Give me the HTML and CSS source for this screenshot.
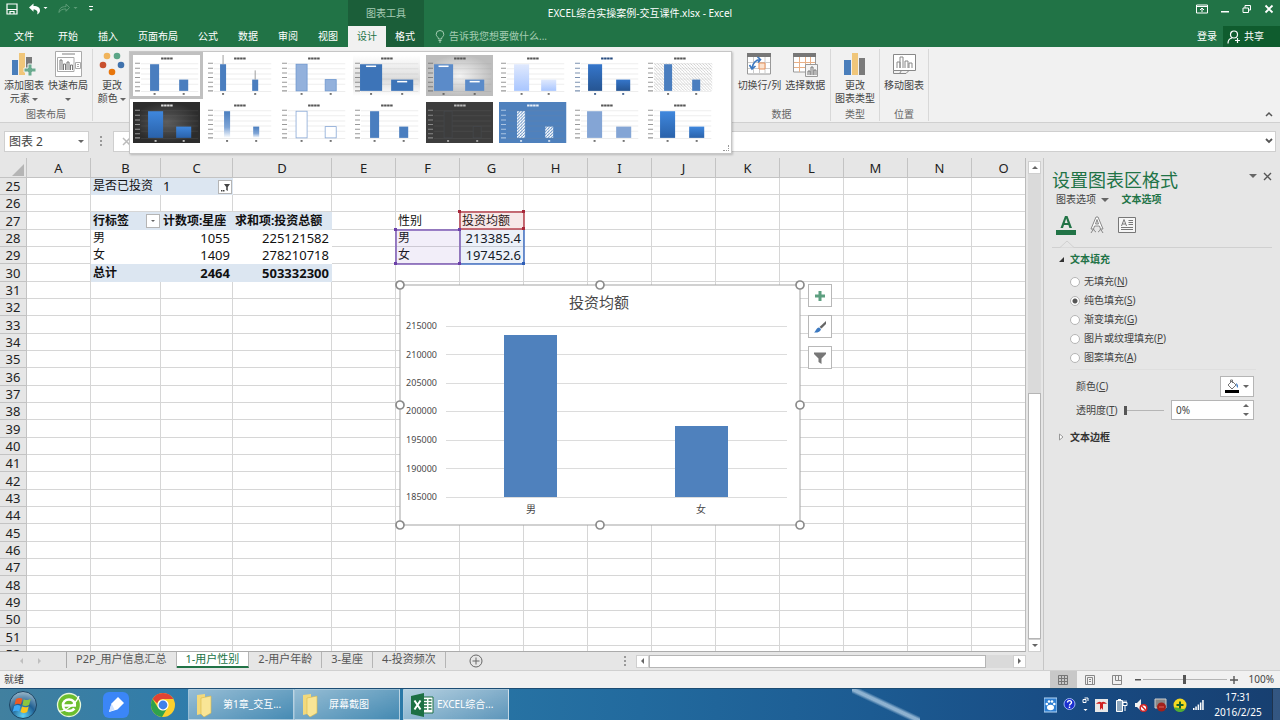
FILE: index.html
```html
<!DOCTYPE html>
<html lang="zh-CN">
<head>
    <meta charset="UTF-8">
    <meta name="viewport" content="width=device-width, initial-scale=1.0">
    <title>EXCEL综合实操案例-交互课件.xlsx - Excel</title>
    <link rel="stylesheet" href="styles.css">
</head>
<body>
    <header class="header">
        <div class="quick">
            <button aria-label="保存"><svg width="12" height="12" viewBox="0 0 12 12" fill="none" stroke="#fff" stroke-width="1.2"><path d="M1 1h10v10H1zM1 6.5h10M4 11V8.5h4V11"/></svg></button>
            <button aria-label="撤消"><svg width="20" height="12" viewBox="0 0 20 12"><path d="M1 4.500 5.500.500V3c4.500 0 6.500 1.600 6.500 4.500 0 1.800-1 3.200-3 4 1.300-2.500 0-5-3.500-5v2.300z" fill="#fff"/><path d="M15.500 4h4l-2 2z" fill="#fff"/></svg></button>
            <button aria-label="恢复"><svg width="20" height="12" viewBox="0 0 20 12"><path d="M11.500 4.500 8 1.200v2.400C4 3.600 1 5 1 9.500 2.500 6.500 5 5.900 8 6v2.300z" fill="none" stroke="#5d9c77"/><path d="M15.500 4h4l-2 2z" fill="#5d9c77"/></svg></button>
            <button aria-label="自定义快速访问工具栏"><svg width="6" height="8" viewBox="0 0 6 8" fill="#fff"><path d="M1 1h4v1H1zM1 4h4L3 6z"/></svg></button>
        </div>
        <nav class="tabs">
            <a href="#" class="tab file">文件</a>
            <a href="#" class="tab">开始</a>
            <a href="#" class="tab">插入</a>
            <a href="#" class="tab">页面布局</a>
            <a href="#" class="tab">公式</a>
            <a href="#" class="tab">数据</a>
            <a href="#" class="tab">审阅</a>
            <a href="#" class="tab">视图</a>
        </nav>
        <div class="context-title">图表工具</div>
        <nav class="context-tabs">
            <a href="#" class="tab active">设计</a>
            <a href="#" class="tab">格式</a>
        </nav>
        <h1 class="doc-title">EXCEL综合实操案例-交互课件.xlsx - Excel</h1>
        <div class="window-buttons">
            <button aria-label="功能区显示选项"><svg width="12" height="10" viewBox="0 0 12 10" fill="none" stroke="#fff"><path d="M.5 1h11v8H.5z"/><path d="M.5 2.500h11M6 8V4.500M4 6l2-2 2 2"/></svg></button>
            <button aria-label="最小化"><svg width="10" height="10" viewBox="0 0 10 10"><path d="M1 7h8v1.500H1z" fill="#fff"/></svg></button>
            <button aria-label="还原"><svg width="10" height="10" viewBox="0 0 10 10" fill="none" stroke="#fff"><path d="M1 4h5.500v4.500H1zM3 4V1.500h5.500V6h-2"/></svg></button>
            <button aria-label="关闭"><svg width="10" height="10" viewBox="0 0 10 10" stroke="#fff" stroke-width="1.800"><path d="M1.500 1.500l7 7M8.500 1.500l-7 7"/></svg></button>
        </div>
        <div class="header-tools">
            <svg width="10" height="13" viewBox="0 0 10 13" fill="none" stroke="#a5cdb3"><path d="M3.500 9C3.500 7 1.200 6.500 1.200 4.300a3.800 3.800 0 0 1 7.600 0C8.800 6.500 6.500 7 6.500 9zM3.500 10.500h3M4 12h2"/></svg>
            <input class="tell-me" type="text" aria-label="告诉我" placeholder="告诉我您想要做什么...">
            <a href="#" class="login">登录</a>
            <button class="share"><svg width="14" height="14" viewBox="0 0 14 14" fill="none" stroke="#fff" stroke-width="1.200"><circle cx="7" cy="4.500" r="3.500"/><path d="M1 13.500c0-3 1.500-5 4-5.500M10.500 8v5M8 10.500h5"/></svg>共享</button>
        </div>
    </header>

    <section class="ribbon">
        <div class="group layout-group">
            <div class="group-buttons">
                <button class="ribbon-btn"><svg width="26" height="26" viewBox="0 0 26 26"><path d="M1 9h6v15H1z" fill="#4a7ebb"/><path d="M8 2h6v22H8z" fill="#f0c67a"/><path d="M15 6h6v12h-6z" fill="#7a7a7a"/><path d="M17 13h4v4h4v4h-4v4h-4v-4h-4v-4h4z" fill="#6bab90" stroke="#f1f1f1"/></svg>添加图表<br>元素 <i class="arrow"></i></button>
                <button class="ribbon-btn"><svg width="27" height="26" viewBox="0 0 27 26" fill="none" stroke="#aaa"><path d="M.5.500h26v25H.5z" fill="#fff"/><path d="M7 3h13" stroke-width="1.500"/><path d="M2.500 6.500H19v14H2.500zM20.500 11.500h5v6h-5zM22 13.500h2M22 15.500h2"/><path d="M5 19V9h2v10M8.500 19v-6h2v6M12 19V11h2v8M15.500 19v-5h2v5" stroke="#777"/></svg>快速布局<br><i class="arrow"></i></button>
            </div>
            <div class="group-name">图表布局</div>
        </div>
        <div class="group colors-group">
            <div class="group-buttons">
                <button class="ribbon-btn"><svg width="26" height="26" viewBox="0 0 26 26"><circle cx="8" cy="5" r="3.300" fill="#f0b45c"/><circle cx="18" cy="5" r="3.300" fill="#5ba587"/><circle cx="4" cy="14" r="3.300" fill="#c8502f"/><circle cx="22" cy="14" r="3.300" fill="#3f72ad"/><circle cx="13" cy="21" r="3.300" fill="#e8760c"/></svg>更改<br>颜色 <i class="arrow"></i></button>
            </div>
        </div>
        <div class="gallery-slot">
            <div class="gallery" id="gallery"></div>
        </div>
        <div class="group data-group">
            <div class="group-buttons">
                <button class="ribbon-btn"><svg width="26" height="26" viewBox="0 0 26 26" fill="none"><path d="M1.500 6v17h23V6" fill="#fff" stroke="#999"/><path d="M1 2h24v4H1z" fill="#777"/><path d="M2 11.500h22M2 17.500h22M7.500 6v17M13.500 6v17M19 6v17" stroke="#ccc"/><path d="M13 12h6v6h-6z" fill="#fbe3cf" stroke="#e8915a"/><path d="M6 17c1-5 3-8 8-8.500M11.500 6l3 2.500-2.500 3M3.500 14l2.500 4 3.500-3" stroke="#3b78c0" stroke-width="1.600"/></svg>切换行/列</button>
                <button class="ribbon-btn"><svg width="26" height="26" viewBox="0 0 26 26" fill="none"><path d="M1.500 6v15h22V6" fill="#fff" stroke="#999"/><path d="M1 2h23v4H1z" fill="#777"/><path d="M2 11.500h21M2 16.500h21M7.500 6v15M13.500 6v15M18.500 6v15" stroke="#e8b087"/><path d="M13.500 13.500h12v12h-12z" fill="#f4f4f4" stroke="#999"/><path d="M16 24v-4h2v4M19 24v-8h2v8M22 24v-5h2v5" stroke="#777"/></svg>选择数据</button>
            </div>
            <div class="group-name">数据</div>
        </div>
        <div class="group type-group">
            <div class="group-buttons">
                <button class="ribbon-btn"><svg width="26" height="26" viewBox="0 0 26 26"><path d="M2 9h7v15H2z" fill="#4a7ebb"/><path d="M10 2h6v22h-6z" fill="#f0c67a"/><path d="M17 7h6v17h-6z" fill="#7a7a7a"/></svg>更改<br>图表类型</button>
            </div>
            <div class="group-name">类型</div>
        </div>
        <div class="group place-group">
            <div class="group-buttons">
                <button class="ribbon-btn"><svg width="26" height="26" viewBox="0 0 26 26" fill="none" stroke="#888"><path d="M2.500 3.500h22v16h-22z" fill="#fff"/><path d="M6 17v-6h3v6M9 17V6h3v11M14 17v-7h3v7M18 17v-5h3v5M2.500 19.500v3h6l2-3M8 22.500h7l3-3"/></svg>移动图表</button>
            </div>
            <div class="group-name">位置</div>
        </div>
        <button class="collapse" aria-label="折叠功能区"><svg width="8" height="6" viewBox="0 0 8 6" fill="none" stroke="#555" stroke-width="1.500"><path d="M1 5l3-3 3 3"/></svg></button>
    </section>

    <div class="formula-bar">
        <div class="name-box">
            <input type="text" value="图表 2" aria-label="名称框">
            <button aria-label="名称列表"><i class="arrow"></i></button>
        </div>
        <span class="dots"></span>
        <div class="formula-box">
            <button aria-label="取消"><svg width="9" height="9" viewBox="0 0 9 9" stroke="#bbb" stroke-width="1.500"><path d="M1 1l7 7M8 1 1 8"/></svg></button>
            <input type="text" aria-label="编辑栏">
            <button aria-label="展开编辑栏"><svg width="8" height="6" viewBox="0 0 8 6" fill="none" stroke="#555" stroke-width="1.800"><path d="M1 1l3 3 3-3"/></svg></button>
        </div>
    </div>

    <main class="main">
        <div class="workbook">
            <div class="sheet-row">
                <div class="sheet">
                    <table class="grid">
                        <thead><tr id="columns"></tr></thead>
                        <tbody id="rows"></tbody>
                    </table>

                    <!-- coloured outlines of the chart's source cells -->
                    <svg class="ranges" width="134" height="58" viewBox="0 0 134 58">
                        <rect x="68" y="4" width="64" height="17" fill="#c0504d" fill-opacity=".13" stroke="#b8434f" stroke-width="1.500"/>
                        <rect x="4" y="22" width="64" height="34" fill="#7e57c2" fill-opacity=".1" stroke="#7d5ab5" stroke-width="1.500"/>
                        <rect x="68" y="22" width="64" height="34" fill="#4472c4" fill-opacity=".1"/>
                        <path d="M68 56h64V22" fill="none" stroke="#4472c4" stroke-width="1.500"/>
                        <path d="M66 2h3v3h-3zM130 2h3v3h-3zM130 19h3v3h-3z" fill="#a8283a"/>
                        <path d="M2 20h3v3H2zM66 20h3v3h-3zM2 54h3v3H2zM66 54h3v3h-3z" fill="#6b3fa8"/>
                        <path d="M130 54h3v3h-3z" fill="#2f5fb8"/>
                    </svg>

                    <div class="chart">
                        <svg width="400" height="240" viewBox="0 0 400 240">
                            <rect width="400" height="240" fill="#fff" stroke="#a3a3a3"/>
                            <text class="chart-title" x="199" y="23">投资均额</text>
                            <path d="M46 41.500h341M46 69.500h341M46 98.500h341M46 126.500h341M46 155.500h341M46 183.500h341M46 212.500h341" stroke="#dcdcdc"/>
                            <g class="axis">
                                <text x="37" y="44">215000</text>
                                <text x="37" y="73">210000</text>
                                <text x="37" y="101">205000</text>
                                <text x="37" y="129">200000</text>
                                <text x="37" y="158">195000</text>
                                <text x="37" y="187">190000</text>
                                <text x="37" y="215">185000</text>
                            </g>
                            <path d="M104 50h53v162h-53zM275 141h53v71h-53z" fill="#4f81bd"/>
                            <g class="category">
                                <text x="131" y="228">男</text>
                                <text x="301" y="228">女</text>
                            </g>
                            <g fill="#fff" stroke="#8c8c8c" stroke-width="1.700">
                                <circle cx="0" cy="0" r="4"/><circle cx="200" cy="0" r="4"/><circle cx="400" cy="0" r="4"/>
                                <circle cx="0" cy="120" r="4"/><circle cx="400" cy="120" r="4"/>
                                <circle cx="0" cy="240" r="4"/><circle cx="200" cy="240" r="4"/><circle cx="400" cy="240" r="4"/>
                            </g>
                        </svg>
                        <div class="chart-tools">
                            <button aria-label="图表元素"><svg width="14" height="14" viewBox="0 0 14 14"><path d="M5.500 2h3v3.500H12v3H8.500V12h-3V8.500H2v-3h3.500z" fill="#5d9f80"/></svg></button>
                            <button aria-label="图表样式"><svg width="14" height="14" viewBox="0 0 14 14"><path d="M13 1v3L8.500 8.500 6.500 7z" fill="#666"/><path d="M6 7.500 8 9c-.5 3-4 4-7 3.500C3 11.500 3 8 6 7.500z" fill="#3b78c0"/></svg></button>
                            <button aria-label="图表筛选器"><svg width="14" height="14" viewBox="0 0 14 14"><path d="M1 1.500h12v1.500L8.500 7.500V13l-3-2V7.500L1 3z" fill="#777"/></svg></button>
                        </div>
                    </div>
                </div>
                <div class="vscroll">
                    <button aria-label="向上"><i class="arrow up"></i></button>
                    <div class="vtrack"><div class="vthumb"></div></div>
                    <button aria-label="向下"><i class="arrow"></i></button>
                </div>
            </div>
            <div class="sheet-tabs">
                <button class="nav-arrow" aria-label="上一个"><i class="arrow left"></i></button>
                <button class="nav-arrow" aria-label="下一个"><i class="arrow right"></i></button>
                <div class="tab-list">
                    <a href="#">P2P_用户信息汇总</a>
                    <a href="#" class="current">1-用户性别</a>
                    <a href="#">2-用户年龄</a>
                    <a href="#">3-星座</a>
                    <a href="#">4-投资频次</a>
                </div>
                <button class="new-sheet" aria-label="新工作表"><svg width="14" height="14" viewBox="0 0 14 14" fill="none" stroke="#666"><circle cx="7" cy="7" r="6"/><path d="M7 3.500v7M3.500 7h7"/></svg></button>
                <div class="hscroll">
                    <span class="dots"></span>
                    <button aria-label="向左"><i class="arrow left"></i></button>
                    <div class="htrack"><div class="hthumb"></div></div>
                    <button aria-label="向右"><i class="arrow right"></i></button>
                </div>
            </div>
        </div>

        <aside class="pane">
            <div class="pane-head">
                <h2>设置图表区格式</h2>
                <button aria-label="任务窗格选项"><i class="arrow big"></i></button>
                <button aria-label="关闭窗格"><svg width="9" height="9" viewBox="0 0 9 9" stroke="#555" stroke-width="1.400"><path d="M1 1l7 7M8 1 1 8"/></svg></button>
            </div>
            <div class="pane-tabs">
                <a href="#">图表选项 <i class="arrow big"></i></a>
                <a href="#" class="current">文本选项</a>
            </div>
            <div class="pane-icons">
                <button aria-label="文本填充与轮廓"><svg width="20" height="20" viewBox="0 0 20 20"><path d="M4.500 13 9 1h2.500L16 13h-2.600l-1-3H8l-1 3zM8.700 8h3L10.200 3.600z" fill="#217346"/><path d="M0 15h20v5H0z" fill="#217346"/></svg></button>
                <button aria-label="文字效果"><svg width="16" height="20" viewBox="0 0 16 20" fill="none" stroke="#888"><path d="M2 14 7 2h2l5 12h-2.500l-1-3h-5l-1 3zM6.500 9h3L8 4.500z" fill="#fff"/><path d="M2 18l2.500-4 1 2 1.500 1M14 18l-2.500-4-1 2-1.500 1"/></svg></button>
                <button aria-label="文本框"><svg width="18" height="16" viewBox="0 0 18 16" fill="none" stroke="#777"><path d="M.5.500h17v15H.5z" fill="#f6f6f6"/><path d="M3.500 9 6 2.500 8.500 9M4.500 7h3M10.500 3.500H15M10.500 5.500H15M10.500 7.500H15M3 10.500h12M3 12.500h12"/></svg></button>
            </div>
            <div class="pane-rule"><svg width="14" height="8" viewBox="0 0 14 8"><path d="M0 7.500 7 1l7 6.500" fill="#e6e6e6" stroke="#d0d0d0"/></svg></div>
            <h3 class="section-title open"><svg width="7" height="7" viewBox="0 0 7 7"><path d="M6 1v5H1z" fill="#333"/></svg>文本填充</h3>
            <div class="fill-options">
                <label><input type="radio" name="fill"><span>无填充(<u>N</u>)</span></label>
                <label><input type="radio" name="fill" checked><span>纯色填充(<u>S</u>)</span></label>
                <label><input type="radio" name="fill"><span>渐变填充(<u>G</u>)</span></label>
                <label><input type="radio" name="fill"><span>图片或纹理填充(<u>P</u>)</span></label>
                <label><input type="radio" name="fill"><span>图案填充(<u>A</u>)</span></label>
            </div>
            <div class="field">
                <label for="color">颜色(<u>C</u>)</label>
                <button id="color" class="color-btn"><svg width="14" height="14" viewBox="0 0 14 14"><path d="M3 6l4-4 4 4-4 4zM5.500 3.500V1h2v3" fill="#fff" stroke="#777"/><path d="M11 4c2 1 2.500 3 1.500 5-1-1-1-3-1.500-5z" fill="#3b78c0"/><path d="M0 11h14v3H0z"/></svg><i class="arrow"></i></button>
            </div>
            <div class="field">
                <label for="alpha">透明度(<u>T</u>)</label>
                <input class="alpha-slider" type="range" min="0" max="100" value="0" aria-label="透明度">
                <div class="spin">
                    <input id="alpha" type="text" value="0%">
                    <div class="spin-buttons">
                        <button aria-label="增加"><i class="arrow up"></i></button>
                        <button aria-label="减少"><i class="arrow"></i></button>
                    </div>
                </div>
            </div>
            <h3 class="section-title"><svg width="7" height="8" viewBox="0 0 7 8"><path d="M1.500 1v6L5 4z" fill="#fff" stroke="#999"/></svg>文本边框</h3>
        </aside>
    </main>

    <footer class="status">
        <span class="ready">就绪</span>
        <button class="view on" aria-label="普通"><svg width="10" height="10" viewBox="0 0 10 10" fill="none" stroke="#777"><path d="M.5.500h9v9h-9zM.5 3.500h9M.5 6.500h9M3.500.500v9M6.500.500v9"/></svg></button>
        <button class="view" aria-label="页面布局"><svg width="10" height="10" viewBox="0 0 10 10" fill="none" stroke="#888"><path d="M.5.500h9v9h-9zM2.500 2.500h5v7h-5zM4 4.500h2M4 6.500h2"/></svg></button>
        <button class="view" aria-label="分页预览"><svg width="10" height="10" viewBox="0 0 10 10" fill="none" stroke="#888"><path d="M.5.500h9v9h-9zM3.500.500v5h6M6.500.500v5"/></svg></button>
        <button class="zoom-btn" aria-label="缩小"><svg width="8" height="8" viewBox="0 0 8 8"><path d="M1 3h6v1.500H1z" fill="#555"/></svg></button>
        <input class="zoom-slider" type="range" min="0" max="200" value="100" aria-label="缩放">
        <button class="zoom-btn" aria-label="放大"><svg width="8" height="8" viewBox="0 0 8 8"><path d="M0 3.300h3.300V0h1.400v3.300H8v1.400H4.700V8H3.300V4.700H0z" fill="#555"/></svg></button>
        <span class="zoom-value">100%</span>
    </footer>

    <div class="taskbar">
        <button class="launch" aria-label="开始"><svg width="30" height="30" viewBox="0 0 30 30"><defs><radialGradient id="orb" cx=".5" cy=".9" r=".9"><stop offset="0" stop-color="#5fd0f5"/><stop offset=".5" stop-color="#1f5f93"/><stop offset="1" stop-color="#9db9c9"/></radialGradient></defs><circle cx="15" cy="15" r="13.500" fill="url(#orb)" stroke="#1c4563"/><path d="M8 9c2.500-1.500 4.500-1.300 6.500-.3L13 14.500c-2-1-4-1.200-6.500.2z" fill="#ee5a24"/><path d="M15.700 9.200c2.500 1.200 4.500 1.200 7-.2l-1.600 6c-2.500 1.300-4.500 1.200-6.800.2z" fill="#8cc63f"/><path d="M6.200 16c2.400-1.300 4.400-1.200 6.400-.1l-1.500 5.600c-2-1-4-1.100-6.400.2z" fill="#3fa9f5"/><path d="M14 16.500c2.200 1.100 4.400 1.100 6.700-.1l-1.500 5.700c-2.400 1.200-4.500 1.200-6.700 0z" fill="#fcc419"/></svg></button>
        <button class="launch" aria-label="浏览器"><svg width="26" height="26" viewBox="0 0 26 26"><circle cx="13" cy="13" r="11.500" fill="#6cbe2e" stroke="#e8f7dc" stroke-width="1.300"/><path d="M7.500 13.500h11.300c.3-3.500-2.200-6-5.800-6s-6 2.500-6 5.800 2.500 5.700 6 5.700c2.300 0 4.200-.9 5.300-2.500" fill="none" stroke="#fff" stroke-width="2.600"/><path d="M3 19C8 20.500 21 11 23 4" fill="none" stroke="#fff" stroke-width="1.300"/></svg></button>
        <button class="launch" aria-label="笔记"><svg width="26" height="26" viewBox="0 0 26 26"><rect width="26" height="26" rx="6" fill="#3b86f7"/><path d="M6 20l2.500-8.500L15 5l6 6-6.500 6.500z" fill="#fff"/><path d="M6 20l2.500-8.500 3 6z" fill="#cfe2ff"/></svg></button>
        <button class="launch" aria-label="Chrome"><svg width="26" height="26" viewBox="0 0 26 26"><circle cx="13" cy="13" r="12" fill="#fbd02d"/><path d="M2.600 7a12 12 0 0 1 20.800 0H13a6 6 0 0 0-5.600 4.500z" fill="#e04334"/><path d="M2.600 7a12 12 0 0 0 9.400 18l5-8.500A6 6 0 0 1 7.500 15z" fill="#2fa24c"/><circle cx="13" cy="13" r="5.600" fill="#fff"/><circle cx="13" cy="13" r="4.400" fill="#3f80ea"/></svg></button>
        <button class="task"><svg width="20" height="24" viewBox="0 0 20 24"><path d="M2 2l8-1v19l-8 2z" fill="#f3d97c"/><path d="M6 5l10-2v17l-7 4-3-3z" fill="#f9e596" stroke="#d8b848" stroke-width=".6"/></svg><span>第1章_交互...</span></button>
        <button class="task"><svg width="20" height="24" viewBox="0 0 20 24"><path d="M2 2l8-1v19l-8 2z" fill="#f3d97c"/><path d="M6 5l10-2v17l-7 4-3-3z" fill="#f9e596" stroke="#d8b848" stroke-width=".6"/></svg><span>屏幕截图</span></button>
        <button class="task running"><svg width="24" height="24" viewBox="0 0 24 24"><path d="M12 4h11v16H12z" fill="#fff" stroke="#1d7044"/><path d="M14 7h3M18.500 7h3M14 10h3M18.500 10h3M14 13h3M18.500 13h3M14 16h3M18.500 16h3" stroke="#1d7044" stroke-width="1.700"/><path d="M1 3l13-3v24L1 21z" fill="#1d7044"/><path d="M4.500 7.500l6 9M10.500 7.500l-6 9" stroke="#fff" stroke-width="2"/></svg><span>EXCEL综合...</span></button>
        <div class="tray">
            <svg width="13" height="16" viewBox="0 0 13 16"><rect y="1" width="13" height="14" fill="#2e7fd2" stroke="#b8d8f5"/><g fill="#fff"><ellipse cx="6.500" cy="10.500" rx="3.500" ry="2.800"/><circle cx="2.800" cy="7" r="1.300"/><circle cx="5" cy="4.500" r="1.300"/><circle cx="8" cy="4.500" r="1.300"/><circle cx="10.300" cy="7" r="1.300"/></g></svg>
            <svg width="13" height="16" viewBox="0 0 13 16"><circle cx="6.500" cy="7" r="5.500" fill="#1a2fd0" stroke="#9fb5f0"/><path d="M4.500 5.500c0-2.500 4-2.500 4 0 0 1.500-2 1.500-2 3M6.500 9.500v1.500" fill="none" stroke="#fff" stroke-width="1.400"/></svg>
            <svg width="7" height="16" viewBox="0 0 7 16"><path d="M1 2.500h3v3H1zM2.500 1H6v3" fill="none" stroke="#fff"/><path d="M1.500 12h4l-2 2z" fill="#fff"/></svg>
            <svg width="13" height="16" viewBox="0 0 13 16"><rect y="2" width="13" height="13" fill="#e8e8e8"/><path d="M1 7c2-2 4-3 5.500-1.500C8 4 10 5 12 7c-2 0-3-.5-4 0v6L6.500 11 5 13V7c-1-.5-2 0-4 0z" fill="#d01f1f"/></svg>
            <svg width="14" height="16" viewBox="0 0 14 16" fill="none" stroke="#fff"><path d="M2.500 3.500h6v11h-6zM4 2.500h3" fill="#8fa7bd"/><path d="M9 5.500h4v3H9zM11 8.500V14M10 3.500v2M12 3.500v2"/></svg>
            <svg width="14" height="16" viewBox="0 0 14 16"><path d="M1 6h2l4-4v12l-4-4H1z" fill="#f2f2f2"/><circle cx="9.500" cy="11" r="3.300" fill="#fff" stroke="#d32626" stroke-width="1.500"/><path d="M7.500 9l4 4" stroke="#d32626" stroke-width="1.500"/></svg>
            <svg width="13" height="16" viewBox="0 0 13 16"><path d="M1 2h11v9H1z" fill="#888" stroke="#ccc"/><circle cx="7.500" cy="10" r="4.500" fill="#a3201a"/><path d="M5 10h5" stroke="#e0655c"/></svg>
            <svg width="14" height="16" viewBox="0 0 14 16"><circle cx="7" cy="8" r="6.500" fill="#f4d821"/><path d="M1 11a6.500 6.500 0 0 0 12 0C9 14 5 9 1 11z" fill="#51ad35"/><path d="M6 4.500h2V7h2.500v2H8v2.500H6V9H3.500V7H6z" fill="#15612a"/></svg>
            <svg width="11" height="16" viewBox="0 0 11 16" fill="#fff"><path d="M0 11h1.500v2H0zM2.300 9.500h1.500V13H2.300zM4.600 7.500h1.500V13H4.600zM6.900 5.500h1.500V13H6.900zM9.200 3h1.500v10H9.200z"/></svg>
        </div>
        <div class="clock"><span>17:31</span><span>2016/2/25</span></div>
        <button class="show-desktop" aria-label="显示桌面"></button>
    </div>

    <script src="script.js"></script>
</body>
</html>
```

FILE: styles.css
```css
* {
    box-sizing: border-box;
}
body {
    display: flex;
    flex-direction: column;
    height: 100vh;
    margin: 0;
    overflow: hidden;
    font-family: "Noto Sans", "Noto Sans CJK SC", sans-serif;
    font-size: 10px;
    line-height: 13px;
    color: #444;
    background-color: #e6e6e6;
}
button, input {
    margin: 0;
    padding: 0;
    border: none;
    background: none;
    font: inherit;
    color: inherit;
}
button {
    display: flex;
    align-items: center;
    justify-content: center;
}
a {
    color: inherit;
    text-decoration: none;
}
h1, h2, h3 {
    margin: 0;
    font-size: 10px;
    font-weight: normal;
}
svg {
    display: block;
    flex: none;
}
.arrow {
    display: inline-block;
    border: 3px solid transparent;
    border-top-color: #666;
    border-bottom-width: 0;
    vertical-align: middle;
}
.arrow.big {
    border-width: 4px 4px 0;
}
.arrow.up {
    border-width: 0 3px 3px;
    border-bottom-color: #666;
}
.arrow.left {
    border-width: 3px 3px 3px 0;
    border-color: transparent #666;
}
.arrow.right {
    border-width: 3px 0 3px 3px;
    border-color: transparent #666;
}
.dots {
    width: 2px;
    height: 10px;
    background: repeating-linear-gradient(#999 0 2px, transparent 2px 4px);
}

/* title bar and tabs */
.header {
    display: grid;
    grid-template-columns: auto auto 1fr;
    grid-template-rows: 26px 21px;
    flex: none;
    color: #fff;
    background-color: #217346;
}
.quick {
    grid-area: 1 / 1;
    display: flex;
    align-items: center;
    gap: 10px;
    padding: 0 0 8px 6px;
}
.tabs {
    grid-area: 2 / 1;
    display: flex;
}
.tab {
    padding: 0 10px;
    line-height: 20px;
}
.tab.file {
    padding: 0 14px;
}
.context-title {
    grid-area: 1 / 2;
    line-height: 26px;
    text-align: center;
    color: #a8cdb6;
    background-color: #1b5e39;
}
.context-tabs {
    grid-area: 2 / 2;
    display: flex;
    background-color: #1b5e39;
}
.context-tabs .tab {
    padding: 0 9px;
}
.context-tabs .active {
    color: #217346;
    background-color: #f1f1f1;
}
.doc-title {
    grid-area: 1 / 1 / 2 / -1;
    justify-self: center;
    line-height: 26px;
}
.window-buttons {
    grid-area: 1 / 3;
    justify-self: end;
    display: flex;
    gap: 12px;
    padding: 0 6px 8px 0;
}
.header-tools {
    grid-area: 2 / 3;
    display: flex;
    align-items: center;
    gap: 4px;
    padding-left: 11px;
}
.tell-me {
    flex: 1;
}
.tell-me::placeholder {
    color: #a5cdb3;
    opacity: 1;
}
.login {
    margin-right: 2px;
}
.share {
    align-self: stretch;
    justify-content: flex-start;
    gap: 3px;
    width: 57px;
    padding-left: 4px;
    background-color: #0f5c2e;
}

/* ribbon */
.ribbon {
    display: flex;
    flex: none;
    height: 76px;
    background-color: #f1f1f1;
    border-bottom: 1px solid #d0d0d0;
}
.group {
    display: flex;
    flex-direction: column;
    justify-content: space-between;
    margin: 2px 0 1px;
    padding: 2px 0 0;
    border-right: 1px solid #d8d8d8;
}
.layout-group {
    width: 93px;
}
.colors-group {
    width: 38px;
    border-right: none;
}
.data-group {
    width: 98px;
}
.type-group {
    width: 49px;
}
.place-group {
    width: 49px;
}
.group-buttons {
    display: flex;
    justify-content: center;
    gap: 4px;
}
.ribbon-btn {
    display: block;
    line-height: 13px;
    text-align: center;
    white-space: nowrap;
}
.ribbon-btn svg {
    margin: 0 auto 2px;
}
.group-name {
    line-height: 14px;
    text-align: center;
    color: #666;
}
.gallery-slot {
    position: relative;
    width: 602px;
}
.gallery {
    position: absolute;
    z-index: 5;
    top: 4px;
    left: -2px;
    display: grid;
    grid-template-columns: repeat(8, 1fr);
    align-content: start;
    width: 603px;
    height: 103px;
    padding: 0 15px 0 0;
    background: #fff;
    border: 1px solid #c6c6c6;
    box-shadow: 1px 1px 2px rgba(0,0,0,0.2);
}
.gallery::after {
    content: "";
    position: absolute;
    right: 2px;
    bottom: 2px;
    width: 5px;
    height: 5px;
    border: 1px dotted #999;
    border-width: 0 1px 1px 0;
}
.style-item {
    height: 47px;
    border: 3px solid transparent;
}
.style-item.selected {
    border-color: #c0c0c0;
}
.collapse {
    align-self: flex-end;
    margin: 0 7px 5px auto;
}

/* formula bar */
.formula-bar {
    display: flex;
    align-items: center;
    flex: none;
    height: 35px;
    padding: 1px 4px 0;
}
.name-box, .formula-box {
    display: flex;
    align-items: center;
    height: 21px;
    padding: 0 4px;
    background-color: #fff;
    border: 1px solid #cfcfcf;
}
.name-box {
    width: 85px;
    font-size: 12px;
}
.name-box input {
    width: 69px;
}
.formula-bar .dots {
    margin: 0 11px;
}
.formula-box {
    flex: 1;
    padding: 0 2px 0 8px;
}
.formula-box input {
    flex: 1;
}

/* worksheet */
.main {
    display: flex;
    flex: 1;
    min-height: 0;
}
.workbook {
    display: flex;
    flex-direction: column;
    flex: 1;
    min-width: 0;
}
.sheet-row {
    display: flex;
    flex: 1;
    min-height: 0;
}
.sheet {
    position: relative;
    flex: 1;
    min-width: 0;
    overflow: hidden;
    background-color: #fff;
    border-right: 1px solid #bbb;
    border-bottom: 1px solid #ababab;
}
.grid {
    table-layout: fixed;
    width: 1036px;
    border-spacing: 0;
    font-size: 12px;
    line-height: 16px;
    color: #111;
}
.grid th, .grid td {
    position: relative;
    height: 17px;
    padding: 0 2px;
    border-right: 1px solid #d6d6d6;
    border-bottom: 1px solid #d6d6d6;
    white-space: nowrap;
    text-align: left;
}
.grid tr:nth-child(3n) td, .grid tr:nth-child(3n) th {
    height: 18px;
}
.grid th {
    padding: 0;
    font-size: 13px;
    font-weight: normal;
    text-align: center;
    color: #222;
    background-color: #e6e6e6;
    border-color: #c3c3c3;
}
.grid thead th {
    width: 64px;
    height: 20px;
}
.grid thead .corner {
    width: 27px;
}
.grid thead .col-b {
    width: 70px;
}
.grid thead .col-c {
    width: 72px;
}
.grid thead .col-d {
    width: 99px;
}
.corner svg {
    margin: 5px 2px 0 auto;
}
.grid td.num {
    font-size: 13px;
    text-align: right;
}
.grid td.left {
    text-align: left;
}
.grid td.plain {
    border-color: #fff;
}
.grid td.fill {
    background-color: #dce6f1;
    border-color: #dce6f1;
}
.grid td.bold {
    font-weight: bold;
}
.cell-btn {
    position: absolute;
    top: 2px;
    right: 0;
    width: 14px;
    height: 14px;
    background: #fff;
    border: 1px solid #b5b5b5;
}
.cell-btn .arrow {
    border-width: 2px 2px 0;
}
.ranges {
    position: absolute;
    top: 50px;
    left: 392px;
}

/* chart */
.chart {
    position: absolute;
    top: 127px;
    left: 400px;
    display: flex;
    gap: 8px;
}
.chart svg {
    overflow: visible;
}
.chart text {
    text-anchor: middle;
    fill: #4a4a4a;
}
.chart .chart-title {
    font-size: 15px;
}
.chart .axis text {
    font-size: 9px;
    text-anchor: end;
}
.chart .category text {
    font-size: 10px;
}
.chart-tools {
    display: flex;
    flex-direction: column;
    gap: 8px;
    margin-top: -1px;
}
.chart-tools button {
    width: 24px;
    height: 23px;
    background: #fff;
    border: 1px solid #b8b8b8;
}

/* scroll bars */
.vscroll {
    display: flex;
    flex-direction: column;
    width: 13px;
    margin: 3px 2px 0 2px;
}
.vscroll button, .hscroll button {
    width: 13px;
    height: 13px;
    flex: none;
    background: #fff;
    border: 1px solid #cfcfcf;
}
.vtrack {
    display: flex;
    flex: 1;
    padding-top: 219px;
    background-color: #dadada;
}
.vthumb {
    flex: 1;
    background: #fff;
    border: 1px solid #b5b5b5;
}
.sheet-tabs {
    display: flex;
    align-items: center;
    flex: none;
    height: 18px;
}
.nav-arrow {
    width: 18px;
    opacity: 0.3;
}
.nav-arrow:first-child {
    margin-left: 12px;
}
.tab-list {
    display: flex;
    align-self: flex-start;
    margin-left: 18px;
    border-left: 1px solid #aaa;
    font-size: 11px;
    line-height: 13px;
    color: #555;
}
.tab-list a {
    padding: 0 9px 1px;
    border-right: 1px solid #b5b5b5;
}
.tab-list .current {
    color: #217346;
    background-color: #fff;
    border-bottom: 2px solid #217346;
}
.new-sheet {
    margin-left: 23px;
}
.hscroll {
    display: flex;
    align-items: center;
    width: 402px;
    margin: 0 17px 0 auto;
}
.hscroll .dots {
    margin-right: 10px;
}
.htrack {
    flex: 1;
    padding-right: 27px;
    background-color: #dadada;
}
.hthumb {
    height: 13px;
    background: #fff;
    border: 1px solid #b5b5b5;
}

/* format pane */
.pane {
    width: 237px;
    padding: 11px 8px 0 8px;
    border-left: 1px solid #c6c6c6;
}
.pane-head {
    display: flex;
    align-items: center;
    gap: 6px;
    height: 22px;
}
.pane-head h2 {
    flex: 1;
    font-size: 18px;
    line-height: 22px;
    color: #217346;
}
.pane-head button {
    margin-bottom: 8px;
}
.pane-tabs {
    display: flex;
    gap: 13px;
    margin-top: 1px;
    padding-left: 4px;
    line-height: 15px;
}
.pane-tabs .arrow {
    margin-left: 2px;
}
.pane-tabs .current {
    font-weight: bold;
    color: #217346;
}
.pane-icons {
    display: flex;
    align-items: center;
    gap: 13px;
    height: 22px;
    margin-top: 7px;
    padding-left: 4px;
}
.pane-rule {
    margin: 4px 0 3px;
    padding-left: 8px;
    border-bottom: 1px solid #d0d0d0;
}
.pane-rule svg {
    margin-bottom: -1px;
}
.section-title {
    display: flex;
    align-items: center;
    gap: 5px;
    padding-left: 6px;
    line-height: 16px;
    font-weight: bold;
    color: #333;
}
.section-title.open {
    color: #217346;
}
.fill-options {
    margin: 5px 16px 4px 18px;
    padding-bottom: 2px;
    border-bottom: 1px solid #dedede;
}
.fill-options label {
    display: flex;
    align-items: center;
    gap: 4px;
    height: 19px;
}
.fill-options input {
    appearance: none;
    width: 10px;
    height: 10px;
    background: #fff;
    border: 1px solid #b5b5b5;
    border-radius: 50%;
}
.fill-options input:checked {
    background: radial-gradient(#555 0 2px, #fff 3px);
}
.field {
    display: flex;
    align-items: center;
    justify-content: space-between;
    height: 24px;
    padding: 0 18px 0 24px;
}
.color-btn {
    gap: 4px;
    width: 34px;
    height: 21px;
    background: #fff;
    border: 1px solid #b5b5b5;
}
.alpha-slider, .zoom-slider {
    appearance: none;
    height: 10px;
    background: linear-gradient(#b5b5b5, #b5b5b5) center / 100% 1px no-repeat;
}
.alpha-slider {
    width: 40px;
}
.alpha-slider::-webkit-slider-thumb, .zoom-slider::-webkit-slider-thumb {
    appearance: none;
    width: 3px;
    height: 9px;
    background: #555;
}
.spin {
    display: flex;
    width: 83px;
    height: 20px;
    padding: 0 4px;
    background: #fff;
    border: 1px solid #b5b5b5;
}
.spin input {
    flex: 1;
    min-width: 0;
}
.spin-buttons {
    display: flex;
    flex-direction: column;
    justify-content: space-around;
}
.field + .section-title {
    margin-top: 7px;
}

/* status bar */
.status {
    display: flex;
    align-items: center;
    flex: none;
    height: 18px;
    padding-right: 6px;
    background-color: #f1f1f1;
    border-top: 1px solid #d0d0d0;
}
.ready {
    flex: 1;
    padding-left: 4px;
}
.view {
    width: 27px;
    height: 17px;
}
.view.on {
    background-color: #c8c8c8;
}
.zoom-btn {
    margin: 0 1px 0 3px;
}
.zoom-slider {
    width: 84px;
}
.zoom-value {
    margin-left: 10px;
}

/* taskbar */
.taskbar {
    display: flex;
    flex: none;
    height: 32px;
    color: #fff;
    background:
        linear-gradient(to bottom left, transparent 43%, rgba(190,215,235,0.7) 48%, rgba(190,215,235,0.7) 52%, transparent 57%) 852px 0 / 68px 32px no-repeat,
        linear-gradient(90deg, #41809f 0, #2f7cab 15%, #2b7aa8 30%, #226a9e 50%, #1c5b92 68%, #184a82 85%, #173f70 100%);
    border-top: 1px solid #1d4d74;
}
.launch {
    width: 47px;
}
.launch:first-child {
    width: 45px;
}
.task {
    justify-content: flex-start;
    gap: 8px;
    width: 106px;
    padding-left: 6px;
    background: linear-gradient(160deg, rgba(255,255,255,0.5), rgba(255,255,255,0.12));
    border: 1px solid rgba(255,255,255,0.4);
}
.launch + .task {
    margin-left: 2px;
}
.task.running {
    gap: 3px;
    margin-left: 3px;
    background: linear-gradient(160deg, rgba(255,255,255,0.65), rgba(255,255,255,0.25));
}
.tray {
    display: flex;
    align-items: center;
    gap: 6px;
    margin-left: auto;
}
.clock {
    display: flex;
    flex-direction: column;
    justify-content: center;
    width: 68px;
    line-height: 15px;
    text-align: center;
}
.show-desktop {
    width: 8px;
    background: rgba(255,255,255,0.12);
    border-left: 1px solid rgba(0,0,0,0.4);
}
```

FILE: script.js
```js
const columns = 'ABCDEFGHIJKLMNO'.split('');

const filterIcon = '<svg width="9" height="9" viewBox="0 0 9 9"><path d="M3 1h6L6.800 4v4L5.200 7V4zM0 7h1.500v1.500H0zM2 7h1.500v1.500H2z" fill="#444"/></svg>';

// cell address -> [html, classes]
const cells = {
    B25: ['是否已投资', 'fill'],
    C25: ['1<button class="cell-btn" aria-label="筛选">' + filterIcon + '</button>', 'fill num left'],
    B27: ['行标签<button class="cell-btn" aria-label="行标签筛选"><i class="arrow"></i></button>', 'fill bold'],
    C27: ['计数项:星座', 'fill bold'],
    D27: ['求和项:投资总额', 'fill bold'],
    B28: ['男', 'plain'],
    C28: ['1055', 'plain num'],
    D28: ['225121582', 'plain num'],
    B29: ['女', 'plain'],
    C29: ['1409', 'plain num'],
    D29: ['278210718', 'plain num'],
    B30: ['总计', 'fill bold'],
    C30: ['2464', 'fill bold num'],
    D30: ['503332300', 'fill bold num'],
    F27: ['性别', ''],
    G27: ['投资均额', ''],
    F28: ['男', ''],
    G28: ['213385.4', 'num'],
    F29: ['女', ''],
    G29: ['197452.6', 'num']
};

function drawGrid() {
    let head = '<th class="corner"><svg width="12" height="12" viewBox="0 0 12 12"><path d="M12 0v12H0z" fill="#b5b5b5"/></svg></th>';
    columns.forEach(c => {
        head += `<th class="col-${c.toLowerCase()}">${c}</th>`;
    });
    document.getElementById('columns').innerHTML = head;

    let body = '';
    for (let r = 25; r <= 52; r++) {
        body += `<tr><th>${r}</th>`;
        columns.forEach(c => {
            const cell = cells[c + r] || ['', ''];
            body += `<td class="${cell[1]}">${cell[0]}</td>`;
        });
        body += '</tr>';
    }
    document.getElementById('rows').innerHTML = body;
}

// chart style previews: x1/x2 are the left edges of the bars, w is their width
const styles = [
    { x1: 17, x2: 46, w: 9, fill: '#4a7ebf' },
    { x1: 14, x2: 46, w: 6, fill: '#4a7ebf', whisker: true },
    { x1: 16, x2: 45, w: 11, fill: '#93b1dc', edge: '#6e97cf' },
    { x1: 7, x2: 38, w: 22, fill: '#3d74b8', bg: 'url(#fade)', caps: true },
    { x1: 8, x2: 39, w: 19, fill: '#5b8bc9', bg: 'url(#grey)', caps: true },
    { x1: 15, x2: 42, w: 15, fill: 'url(#pale)' },
    { x1: 15, x2: 43, w: 14, fill: 'url(#deep)', ink: '#24497d' },
    { x1: 18, x2: 46, w: 8, fill: '#4a7ebf', plot: 'url(#hatch)' },
    { x1: 15, x2: 43, w: 15, fill: 'url(#bright)', bg: 'url(#dark)', ink: '#ddd' },
    { x1: 18, x2: 47, w: 6, fill: 'url(#melt)' },
    { x1: 16, x2: 45, w: 11, fill: '#fff', edge: '#8aa9d6' },
    { x1: 17, x2: 46, w: 9, fill: '#4a7ebf' },
    { x1: 18, x2: 47, w: 8, fill: '#3d3d3d', edge: '#44474b', bg: '#3d3d3d', ink: '#bbb' },
    { x1: 18, x2: 46, w: 8, fill: 'url(#stripes)', bg: '#4f81bd', ink: '#e8f0fa' },
    { x1: 14, x2: 43, w: 15, fill: '#84a5d5' },
    { x1: 14, x2: 43, w: 15, fill: 'url(#bright)' }
];

const defs = `<defs>
    <linearGradient id="fade" x2="0" y2="1"><stop offset="0" stop-color="#fff"/><stop offset=".6" stop-color="#dcdcdc"/><stop offset="1" stop-color="#fff"/></linearGradient>
    <radialGradient id="grey"><stop offset="0" stop-color="#f4f4f4"/><stop offset="1" stop-color="#bdbdbd"/></radialGradient>
    <linearGradient id="pale" x2="0" y2="1"><stop offset="0" stop-color="#e0e9fd"/><stop offset="1" stop-color="#a9c6ff"/></linearGradient>
    <linearGradient id="deep" x2="0" y2="1"><stop offset="0" stop-color="#3576cb"/><stop offset="1" stop-color="#265592"/></linearGradient>
    <linearGradient id="bright" x2="0" y2="1"><stop offset="0" stop-color="#3f87dd"/><stop offset="1" stop-color="#2a62aa"/></linearGradient>
    <linearGradient id="melt" x2="0" y2="1"><stop offset="0" stop-color="#4a7ebf"/><stop offset=".6" stop-color="#7fa5d6"/><stop offset="1" stop-color="#fff"/></linearGradient>
    <radialGradient id="dark"><stop offset="0" stop-color="#5c5c5c"/><stop offset="1" stop-color="#2c2c2c"/></radialGradient>
    <pattern id="hatch" width="3" height="3" patternUnits="userSpaceOnUse"><path d="M0 0l3 3" stroke="#bbb" stroke-width=".6"/></pattern>
    <pattern id="stripes" width="3" height="3" patternUnits="userSpaceOnUse"><rect width="3" height="3" fill="#fff"/><path d="M0 3l3-3" stroke="#4f81bd" stroke-width=".9"/></pattern>
</defs>`;

function preview(s, first) {
    const ink = s.ink || '#555';
    let svg = '<svg width="100%" height="41" viewBox="0 0 67 40" preserveAspectRatio="none">';
    if (first) svg += defs;
    svg += `<rect width="67" height="40" fill="${s.bg || '#fff'}"/>`;
    if (s.plot) svg += `<rect x="8" y="8" width="58" height="27" fill="${s.plot}"/>`;
    svg += `<path d="M8 8.500h57M8 13.500h57M8 18.500h57M8 23.500h57M8 28.500h57M8 35.500h57" stroke="#888" stroke-opacity=".15"/>`;
    svg += `<path d="M2 8h5M2 13h5M2 17.500h5M2 22h5M2 26.500h5M2 31h5M2 35h5" stroke="${ink}" stroke-opacity=".6"/>`;
    svg += `<path d="M28 3.500h12" stroke="${ink}" stroke-width="2" stroke-dasharray="2.500 .5"/>`;
    [[s.x1, 9], [s.x2, 24]].forEach(([x, y]) => {
        svg += `<rect x="${x}" y="${y}" width="${s.w}" height="${35 - y}" fill="${s.fill}" stroke="${s.edge || 'none'}" stroke-width=".8"/>`;
        svg += `<path d="M${x + s.w / 2 - 1} 38h2" stroke="${ink}" stroke-width="1.500"/>`;
        if (s.caps) svg += `<path d="M${x + s.w / 2 - 5} ${y + 2}h10" stroke="#fff" stroke-width="1.500"/>`;
        if (s.whisker) svg += `<path d="M${x + s.w / 2} ${y - 9}v9" stroke="#888" stroke-width=".8"/>`;
    });
    return svg + '</svg>';
}

function drawGallery() {
    document.getElementById('gallery').innerHTML = styles.map((s, i) =>
        `<button class="style-item${i === 0 ? ' selected' : ''}" aria-label="样式 ${i + 1}">${preview(s, i === 0)}</button>`
    ).join('');
}

drawGrid();
drawGallery();
```
